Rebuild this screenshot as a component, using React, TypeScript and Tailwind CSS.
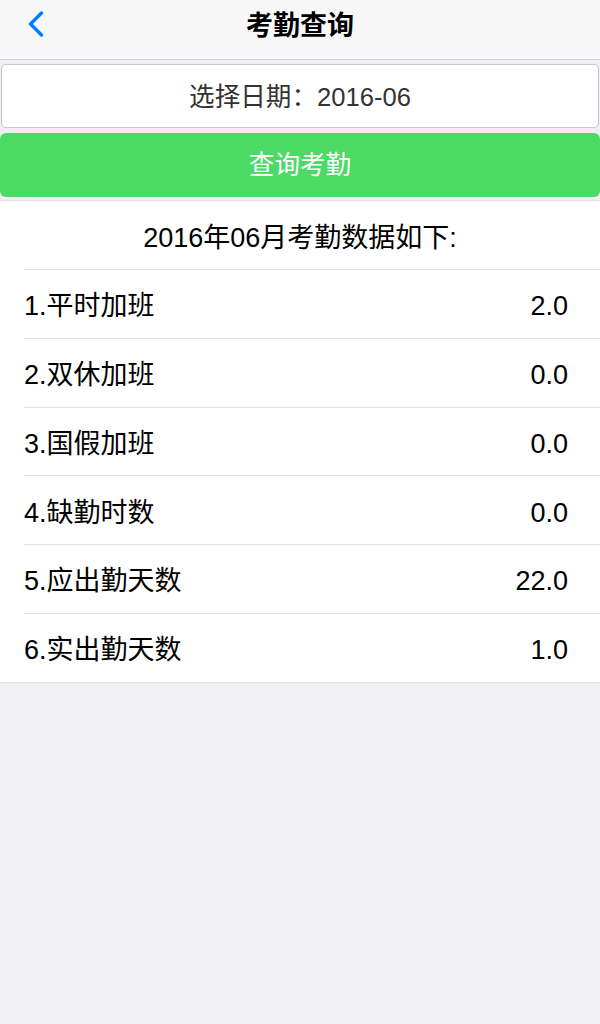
import React from "react";

const rows: [string, string][] = [
  ["1.平时加班", "2.0"],
  ["2.双休加班", "0.0"],
  ["3.国假加班", "0.0"],
  ["4.缺勤时数", "0.0"],
  ["5.应出勤天数", "22.0"],
  ["6.实出勤天数", "1.0"],
];

export default function App() {
  return (
    <div
      className="min-h-[1024px] bg-[#efeff4] text-black"
      style={{ fontFamily: '"Liberation Sans", "Noto Sans CJK SC", sans-serif' }}
    >
      <header className="relative h-[60px] bg-[#f7f7f7] border-b border-[#d4d4d8] flex justify-center">
        <button className="absolute left-[20px] top-[6px] w-[32px] h-[36px] flex items-center justify-center">
          <svg width="18" height="26" viewBox="0 0 18 26" fill="none">
            <polyline
              points="14.5,2 3.5,13 14.5,24"
              stroke="#007aff"
              strokeWidth="3.4"
              strokeLinecap="round"
              strokeLinejoin="round"
            />
          </svg>
        </button>
        <h1 className="mt-[9px] text-[27px] leading-[34px] font-bold">考勤查询</h1>
      </header>

      <div className="pt-[4px]">
        <div className="h-[64px] mx-[1px] pt-[2px] bg-white border border-[#c8c7cc] rounded-[5px] flex items-center justify-center text-[25.6px] text-[#333333]">
          选择日期：2016-06
        </div>
        <button className="mt-[5px] w-full h-[64px] bg-[#4cd964] rounded-[6px] flex items-center justify-center text-[25.6px] text-white">
          查询考勤
        </button>
      </div>

      <section className="mt-[3px] bg-white border-t border-b border-[#e0e0e4]">
        <div className="h-[68px] flex items-center justify-center text-[27px] pt-[6px]">
          2016年06月考勤数据如下:
        </div>
        {rows.map(([label, value]) => (
          <div key={label} className="ml-[24px] border-t border-[#e0e0e4]">
            <div className="h-[67.8px] pt-[5px] flex items-center justify-between pr-[32px] text-[27px]">
              <span>{label}</span>
              <span>{value}</span>
            </div>
          </div>
        ))}
      </section>
    </div>
  );
}
